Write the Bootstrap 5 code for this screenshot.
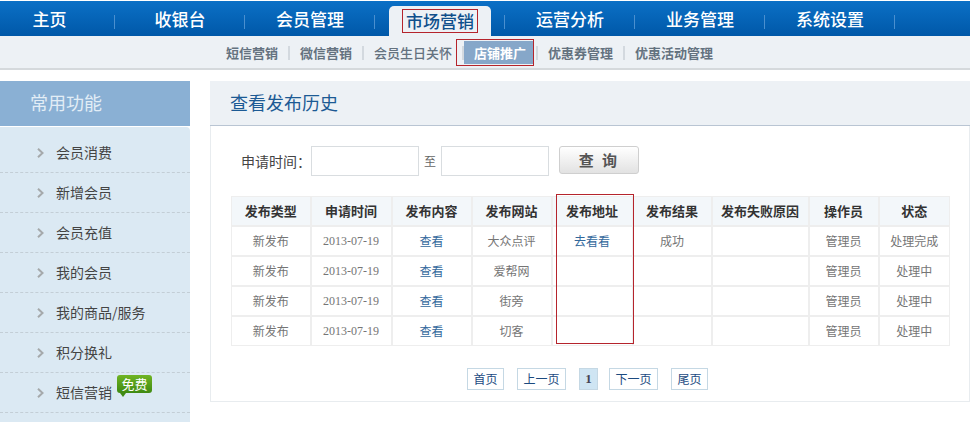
<!DOCTYPE html>
<html lang="zh-CN">
<head>
<meta charset="utf-8">
<title>查看发布历史</title>
<link href="https://cdn.jsdelivr.net/npm/bootstrap@5.3.0/dist/css/bootstrap.min.css" rel="stylesheet">
<style>
html,body{height:422px;overflow:hidden;}
body{font-family:"Noto Sans CJK SC","Liberation Sans",sans-serif;background:#fff;color:#555;font-size:13px;padding-top:1px;}
a{text-decoration:none;}
.mainbar{height:35px;background:linear-gradient(#0b70c6,#0058a8);margin-bottom:0;padding-left:0;overflow:hidden;}
.mainitem{width:130px;height:35px;font-size:17px;line-height:36px;font-weight:500;text-align:center;color:#fff;
 background:linear-gradient(#4a8fcf,#4a8fcf) no-repeat right 14px/1px 14px;flex:none;}
.mainitem:first-child{width:115px;padding-left:0;text-indent:-16px;}
.mainitem a{color:#fff;display:block;}
.mainitem a.cur{width:102px;height:30px;margin:5px auto 0;line-height:30px;background:#edf1f5;color:#0f4f8c;border-radius:5px 5px 0 0;}
.subbar{height:34px;background:#edf1f5;border-bottom:2px solid #d5d9dc;padding-left:226px;padding-top:1px;font-size:13px;font-weight:700;}
.subbar a{color:#64727f;white-space:nowrap;}
.subbar a.thin{font-weight:500;}
.subbar a.cur{background:#86a7c9;color:#fff;height:23px;line-height:23px;padding:0 7px 0 10px;margin-top:-1px;}
.subsep{width:2px;height:14px;background:#d3d9df;margin:0 10px;flex:none;}
.subsep.before{margin:0 0 0 10px;}
.subsep.after{margin:0 10px 0 3px;}
.page{margin-top:11px;}
.sidecol{width:190px;flex:none;}
.sidehead{height:45px;background:#8ab0d4;color:#e2edf6;font-size:18px;line-height:43px;padding-left:30px;margin-bottom:1px;}
.sidelist{background:#dbe9f3;padding-top:6px;height:300px;border-radius:0 4px 0 0;}
.sideitem{height:40px;border-bottom:1px dashed #c3ced6;padding-left:37px;color:#444;font-size:14px;gap:12px;flex:none;}
.sideitem svg{flex:none;}
.freetag{position:absolute;left:117px;top:2px;width:35px;height:18px;background:linear-gradient(#6fb423,#3f8a12);border-radius:3px;color:#fff;font-size:13px;line-height:17px;text-align:center;}
.freetag::after{content:"";position:absolute;left:3px;top:18px;border-style:solid;border-width:4px 3px 0 3px;border-color:#3f8a12 transparent transparent transparent;}
.panelcol{margin-left:20px;width:760px;flex:none;}
.panelhead{height:45px;background:#edf1f5;border-bottom:1px solid #b9c5d3;color:#1c5a94;font-size:18px;line-height:43px;padding-left:20px;}
.panelbody{height:276px;border-left:1px solid #e8ecef;border-bottom:1px solid #e8ecef;border-right:1px solid #e8ecef;padding:20px 20px 0 20px;}
.searchrow{height:30px;font-size:14px;color:#444;padding-left:10px;}
.dateinput{width:108px;height:30px;border:1px solid #d9dde0;background:#fff;margin-left:0;padding:0 4px;outline:0;}
.tilde{font-size:12px;color:#666;margin:0 5px;}
.searchbtn{width:80px;height:28px;margin-left:10px;padding:0;border:1px solid #cfcfcf;border-radius:3px;background:linear-gradient(#fff,#e2e2e2);color:#555;font-size:15px;font-weight:700;line-height:24px;letter-spacing:2.4px;margin-bottom:2px;}
.tablewrap{width:718px;margin-top:20px;}
.histtable{width:718px;table-layout:fixed;border-collapse:collapse;margin:0;}
.histtable th,.histtable td{height:30px;padding:0;text-align:center;vertical-align:middle;border:2px solid #eee;box-shadow:none;background:#fff;color:#757575;font-size:12px;line-height:20px;font-weight:400;}
.histtable tr:first-child th{border-top-width:1px;height:29px;}
.histtable tr:last-child td{border-bottom-width:1px;}
.histtable th:first-child,.histtable td:first-child{border-left-width:1px;}
.histtable th:last-child,.histtable td:last-child{border-right-width:1px;}
.histtable th{background:#f3f7fa;color:#333;font-weight:700;font-size:13px;}
.histtable td.dateval{font-family:"Liberation Serif",serif;font-size:12px;padding-top:1px;}
.histtable a{color:#33689c;}
.redbox{position:absolute;border:1px solid #b5242c;pointer-events:none;}
.redbox-col{left:325px;top:-2px;width:78px;height:150px;}
.redbox-tab{left:402px;top:9px;width:76px;height:24px;}
.redbox-sub{left:456px;top:39px;width:78px;height:27px;}
.pager{margin-top:22px;gap:0;padding-left:236px;height:22px;font-size:12px;}
.pager a{height:22px;line-height:20px;border:1px solid #c5d8e4;color:#1c4a7f;text-align:center;flex:none;}
.pager a.w2{width:37px;margin-right:13px;}
.pager a.w3{width:49px;margin-right:13px;}
.pager a.on{width:19px;margin-right:11px;background:#cfe5f3;font-family:"Liberation Serif",serif;font-weight:700;font-size:13px;color:#445;}
</style>
</head>
<body>
<nav class="mainbar d-flex">
  <div class="mainitem"><a href="#">主页</a></div>
  <div class="mainitem"><a href="#">收银台</a></div>
  <div class="mainitem"><a href="#">会员管理</a></div>
  <div class="mainitem"><a class="cur" href="#">市场营销</a></div>
  <div class="mainitem"><a href="#">运营分析</a></div>
  <div class="mainitem"><a href="#">业务管理</a></div>
  <div class="mainitem"><a href="#">系统设置</a></div>
</nav>
<div class="subbar d-flex align-items-center">
  <a href="#">短信营销</a><span class="subsep"></span>
  <a href="#">微信营销</a><span class="subsep"></span>
  <a class="thin" href="#">会员生日关怀</a><span class="subsep before"></span>
  <a class="cur" href="#">店铺推广</a><span class="subsep after"></span>
  <a href="#">优惠券管理</a><span class="subsep"></span>
  <a href="#">优惠活动管理</a>
</div>
<div class="page d-flex">
  <aside class="sidecol">
    <div class="sidehead">常用功能</div>
    <div class="sidelist">
      <div class="sideitem d-flex align-items-center"><svg width="7" height="10" viewBox="0 0 7 10"><path d="M1 .8 5.5 5 1 9.2" fill="none" stroke="#a5a9ab" stroke-width="2"/></svg>会员消费</div>
      <div class="sideitem d-flex align-items-center"><svg width="7" height="10" viewBox="0 0 7 10"><path d="M1 .8 5.5 5 1 9.2" fill="none" stroke="#a5a9ab" stroke-width="2"/></svg>新增会员</div>
      <div class="sideitem d-flex align-items-center"><svg width="7" height="10" viewBox="0 0 7 10"><path d="M1 .8 5.5 5 1 9.2" fill="none" stroke="#a5a9ab" stroke-width="2"/></svg>会员充值</div>
      <div class="sideitem d-flex align-items-center"><svg width="7" height="10" viewBox="0 0 7 10"><path d="M1 .8 5.5 5 1 9.2" fill="none" stroke="#a5a9ab" stroke-width="2"/></svg>我的会员</div>
      <div class="sideitem d-flex align-items-center"><svg width="7" height="10" viewBox="0 0 7 10"><path d="M1 .8 5.5 5 1 9.2" fill="none" stroke="#a5a9ab" stroke-width="2"/></svg>我的商品/服务</div>
      <div class="sideitem d-flex align-items-center"><svg width="7" height="10" viewBox="0 0 7 10"><path d="M1 .8 5.5 5 1 9.2" fill="none" stroke="#a5a9ab" stroke-width="2"/></svg>积分换礼</div>
      <div class="sideitem d-flex align-items-center position-relative"><svg width="7" height="10" viewBox="0 0 7 10"><path d="M1 .8 5.5 5 1 9.2" fill="none" stroke="#a5a9ab" stroke-width="2"/></svg>短信营销<span class="freetag">免费</span></div>
    </div>
  </aside>
  <main class="panelcol">
    <div class="panelhead">查看发布历史</div>
    <div class="panelbody">
      <form class="searchrow d-flex align-items-center">
        <span>申请时间：</span><input class="dateinput" type="text"><span class="tilde">至</span><input class="dateinput" type="text"><button class="searchbtn" type="button">查&nbsp;询</button>
      </form>
      <div class="tablewrap position-relative">
        <table class="table histtable">
          <colgroup><col style="width:79px"><col style="width:81px"><col style="width:80px"><col style="width:80px"><col style="width:81px"><col style="width:79px"><col style="width:97px"><col style="width:70px"><col style="width:71px"></colgroup>
          <thead><tr><th>发布类型</th><th>申请时间</th><th>发布内容</th><th>发布网站</th><th>发布地址</th><th>发布结果</th><th>发布失败原因</th><th>操作员</th><th>状态</th></tr></thead>
          <tbody>
            <tr><td>新发布</td><td class="dateval">2013-07-19</td><td><a href="#">查看</a></td><td>大众点评</td><td><a href="#">去看看</a></td><td>成功</td><td></td><td>管理员</td><td>处理完成</td></tr>
            <tr><td>新发布</td><td class="dateval">2013-07-19</td><td><a href="#">查看</a></td><td>爱帮网</td><td></td><td></td><td></td><td>管理员</td><td>处理中</td></tr>
            <tr><td>新发布</td><td class="dateval">2013-07-19</td><td><a href="#">查看</a></td><td>街旁</td><td></td><td></td><td></td><td>管理员</td><td>处理中</td></tr>
            <tr><td>新发布</td><td class="dateval">2013-07-19</td><td><a href="#">查看</a></td><td>切客</td><td></td><td></td><td></td><td>管理员</td><td>处理中</td></tr>
          </tbody>
        </table>
        <div class="redbox redbox-col"></div>
      </div>
      <div class="pager d-flex">
        <a class="w2" href="#">首页</a><a class="w3" href="#">上一页</a><a class="on" href="#">1</a><a class="w3" href="#">下一页</a><a class="w2" href="#">尾页</a>
      </div>
    </div>
  </main>
</div>
<div class="redbox redbox-tab"></div>
<div class="redbox redbox-sub"></div>
<script src="https://cdn.jsdelivr.net/npm/bootstrap@5.3.0/dist/js/bootstrap.bundle.min.js"></script>
</body>
</html>
